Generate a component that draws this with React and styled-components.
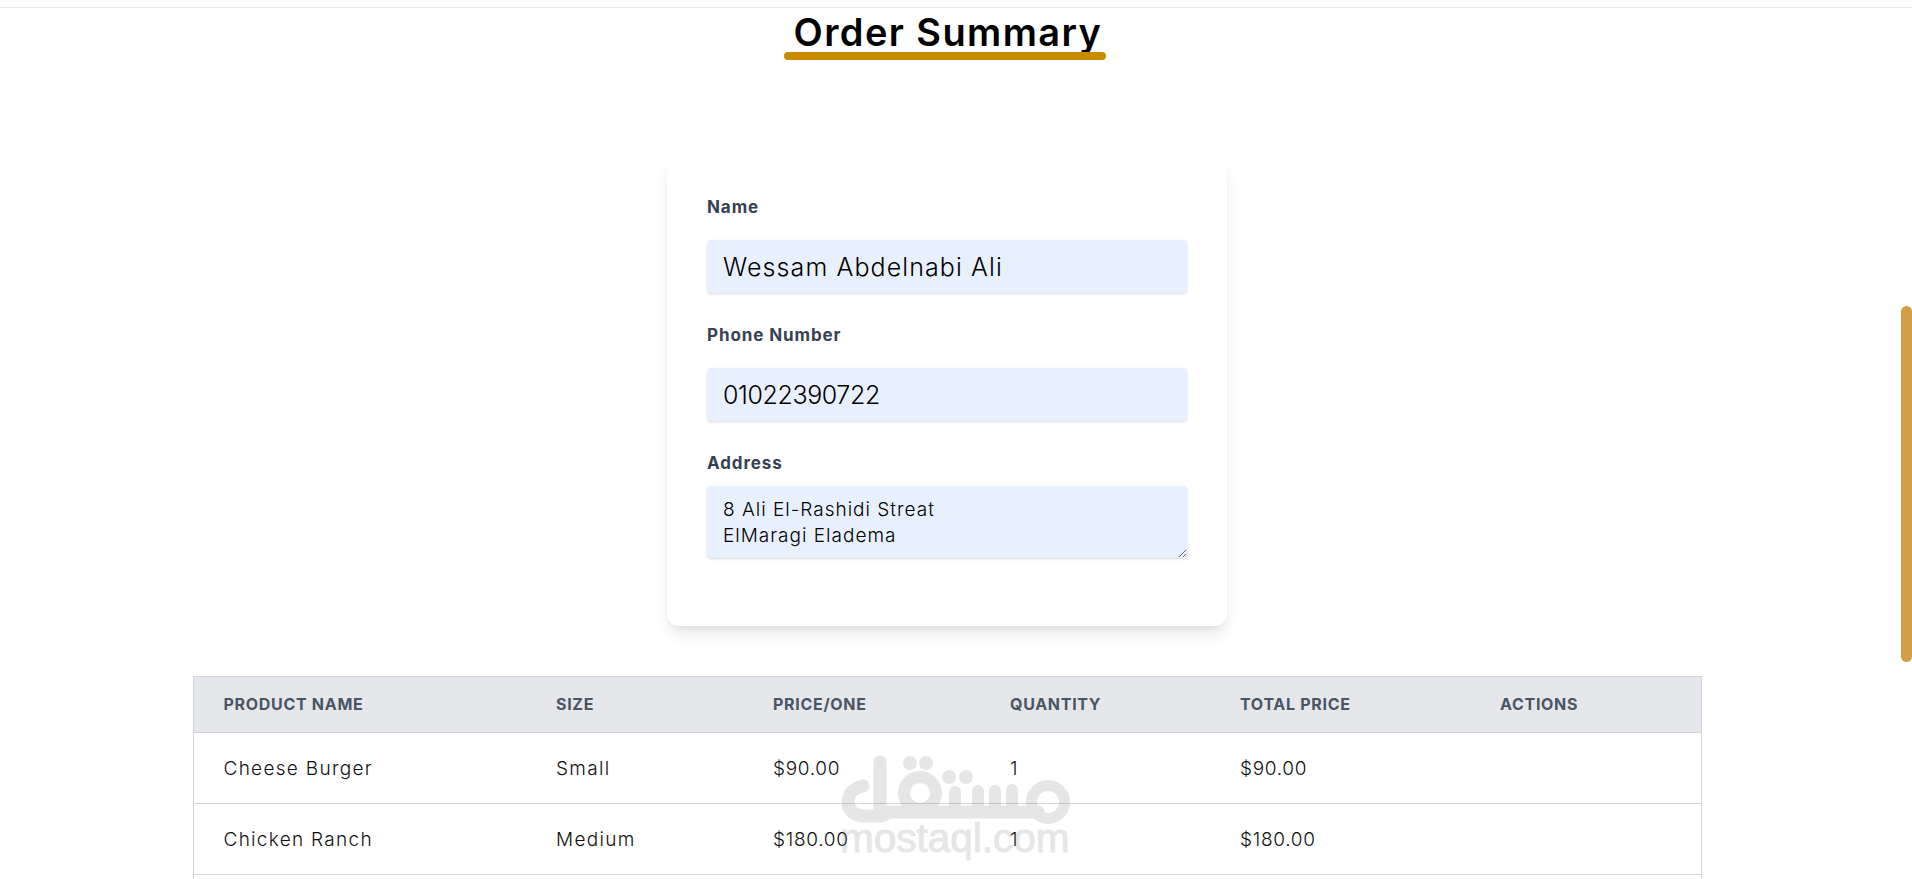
import React from "react";
import styled, { createGlobalStyle } from "styled-components";

const GlobalStyle = createGlobalStyle`
  html, body {
    margin: 0;
    height: 100%;
    overflow: hidden;
    background: #fff;
    font-family: Inter, "Noto Sans", sans-serif;
  }
  * { box-sizing: border-box; }
`;

const rows = [
  { name: "Cheese Burger", size: "Small", price: "$90.00", qty: "1", total: "$90.00" },
  { name: "Chicken Ranch", size: "Medium", price: "$180.00", qty: "1", total: "$180.00" },
];

const columns = [
  { label: "Product Name", width: 333 },
  { label: "Size", width: 217 },
  { label: "Price/One", width: 237 },
  { label: "Quantity", width: 230 },
  { label: "Total Price", width: 260 },
  { label: "Actions", width: 231 },
];

export default function App() {
  return (
    <>
      <GlobalStyle />
      <TopRule />
      <Main>
        <Title>Order Summary</Title>

        <Card>
          <Field>
            <Label>Name</Label>
            <Input readOnly defaultValue="Wessam Abdelnabi Ali" />
          </Field>
          <Field>
            <Label>Phone Number</Label>
            <Input $digits readOnly defaultValue="01022390722" />
          </Field>
          <Field $tight>
            <Label $tight>Address</Label>
            <TextArea readOnly defaultValue={"8 Ali El-Rashidi Streat\nElMaragi Eladema"} />
          </Field>
        </Card>

        <Table>
          <colgroup>
            {columns.map((c) => (
              <col key={c.label} width={c.width} />
            ))}
          </colgroup>
          <thead>
            <tr>
              {columns.map((c) => (
                <Th key={c.label}>{c.label}</Th>
              ))}
            </tr>
          </thead>
          <tbody>
            {rows.map((r) => (
              <tr key={r.name}>
                <Td>{r.name}</Td>
                <Td>{r.size}</Td>
                <Td $num>{r.price}</Td>
                <Td $num>{r.qty}</Td>
                <Td $num>{r.total}</Td>
                <Td />
              </tr>
            ))}
            <tr>
              <Td colSpan={6} />
            </tr>
          </tbody>
        </Table>
      </Main>

      <Watermark>
        <svg width="240" height="85" viewBox="0 0 240 85" fill="none" stroke="currentColor" strokeWidth="13" strokeLinecap="round" strokeLinejoin="round">
          <path d="M28 36C18 38 13 45 13 52c0 9 7 14 17 14h15c3 0 5-1 8-4h150" />
          <path d="M45 12v50" />
          <circle cx="85" cy="43" r="16" strokeWidth="12" />
          <path strokeWidth="12" d="M120 62V42M143 62V41M160 62V41M177 62V40" />
          <circle cx="213" cy="52" r="16.5" strokeWidth="11" />
          <g fill="currentColor" stroke="none">
            <circle cx="75" cy="13" r="7" />
            <circle cx="91" cy="13" r="7" />
            <circle cx="114" cy="27" r="7" />
            <circle cx="131" cy="27" r="7" />
          </g>
        </svg>
        <WatermarkText>mostaql.com</WatermarkText>
      </Watermark>

      <ScrollThumb />
    </>
  );
}

const TopRule = styled.div`
  height: 8px;
  border-bottom: 1px solid #e5e7eb;
`;

const Main = styled.main`
  height: 871px;
  width: 1894px;
  overflow: hidden;
  display: flex;
  flex-direction: column;
  align-items: center;
`;

const Title = styled.h1`
  position: relative;
  flex-shrink: 0;
  width: 322px;
  height: 52px;
  margin: 0 4px 95px 0;
  padding-left: 6px;
  color: #000;
  font-size: 38px;
  line-height: 48px;
  font-weight: 600;
  letter-spacing: 1.4px;
  white-space: nowrap;
  text-align: center;
  &::after {
    content: "";
    position: absolute;
    left: 0;
    right: 0;
    bottom: 0;
    height: 8px;
    border-radius: 4px;
    background: #ca8a04;
  }
`;

const Card = styled.form`
  flex-shrink: 0;
  width: 560px;
  height: 471px;
  padding: 40px 40px 0;
  background: #fff;
  border-radius: 12px;
  box-shadow: 0 10px 15px -3px rgba(0, 0, 0, 0.1), 0 4px 6px -2px rgba(0, 0, 0, 0.05);
`;

const Field = styled.div`
  display: flex;
  flex-direction: column;
  margin-bottom: ${(p) => (p.$tight ? "0" : "30px")};
`;

const Label = styled.label`
  color: #374151;
  font-size: 17px;
  line-height: 24px;
  font-weight: 700;
  letter-spacing: 0.9px;
  margin-bottom: ${(p) => (p.$tight ? "11px" : "21px")};
`;

const Input = styled.input`
  width: 480px;
  height: 53px;
  padding: 0 16px;
  border: 0;
  border-radius: 4px;
  outline: none;
  background: #e8f0fe;
  color: #000;
  font-family: inherit;
  font-size: 25px;
  font-weight: 300;
  letter-spacing: ${(p) => (p.$digits ? "-0.4px" : "1.1px")};
  box-shadow: 0 1px 3px rgba(0, 0, 0, 0.1), 0 1px 2px rgba(0, 0, 0, 0.06);
`;

const TextArea = styled.textarea`
  display: block;
  width: 480px;
  height: 72px;
  padding: 11px 16px 0;
  border: 0;
  border-radius: 4px;
  outline: none;
  background: #e8f0fe;
  color: #000;
  font-family: inherit;
  font-size: 19px;
  font-weight: 300;
  line-height: 25.6px;
  letter-spacing: 1px;
  box-shadow: 0 1px 3px rgba(0, 0, 0, 0.1), 0 1px 2px rgba(0, 0, 0, 0.06);
`;

const Table = styled.table`
  flex-shrink: 0;
  width: 1508px;
  margin-top: 50px;
  border-collapse: collapse;
  table-layout: fixed;
`;

const Th = styled.th`
  height: 56px;
  padding: 0 30px 2px;
  border-style: solid;
  border-color: #d1d5db;
  border-width: 1px 0;
  background: #e5e7eb;
  color: #4b5563;
  font-size: 16px;
  font-weight: 700;
  letter-spacing: 0.7px;
  text-align: left;
  text-transform: uppercase;
  white-space: nowrap;
  &:first-child { border-left-width: 1px; }
  &:last-child { border-right-width: 1px; }
`;

const Td = styled.td`
  height: 71px;
  padding: 0 30px;
  border: 1px solid #d1d5db;
  border-width: 1px 0;
  color: #111;
  font-size: 19px;
  font-weight: 300;
  letter-spacing: ${(p) => (p.$num ? "0.7px" : "1.3px")};
  white-space: nowrap;
  &:first-child { border-left-width: 1px; }
  &:last-child { border-right-width: 1px; }
`;

const Watermark = styled.div`
  position: absolute;
  left: 835px;
  top: 750px;
  width: 240px;
  color: #787878;
  opacity: 0.18;
  pointer-events: none;
  svg { display: block; }
`;

const WatermarkText = styled.div`
  margin: -17px 0 0 5px;
  color: #787878;
  font-family: "Liberation Sans", Arial, sans-serif;
  font-size: 40.5px;
  line-height: 40px;
  -webkit-text-stroke: 1px #787878;
  white-space: nowrap;
`;

const ScrollThumb = styled.div`
  position: absolute;
  right: 0;
  top: 306px;
  width: 11px;
  height: 356px;
  border-radius: 6px;
  background: #d29d44;
`;
